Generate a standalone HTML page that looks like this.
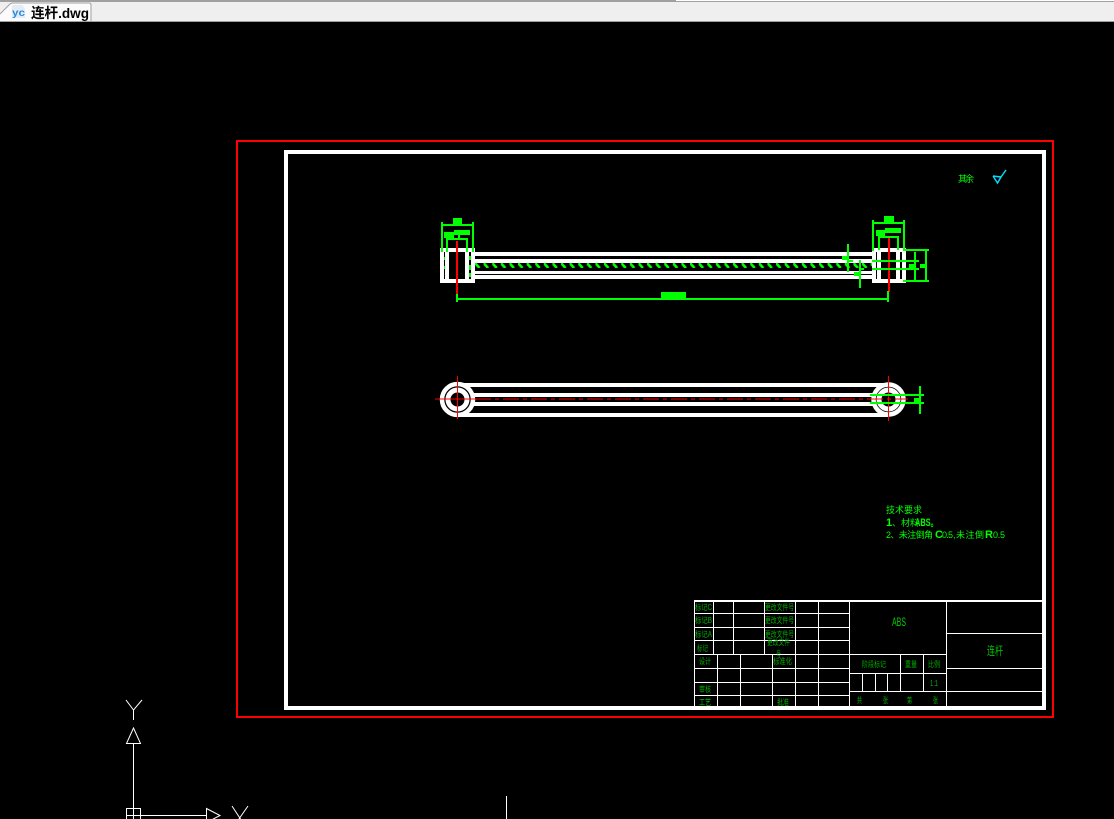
<!DOCTYPE html>
<html><head><meta charset="utf-8"><style>
html,body{margin:0;padding:0;background:#000;width:1114px;height:819px;overflow:hidden}
svg{display:block}
text{font-family:"Liberation Sans","Noto Sans CJK SC",sans-serif}
.d{fill:#00b000;font-size:8px}
.g{fill:#00ff00;font-size:9px}
.b{fill:#00ff00;font-size:11px;font-weight:bold}
</style></head><body>
<svg width="1114" height="819" viewBox="0 0 1114 819" xmlns="http://www.w3.org/2000/svg">
<defs><pattern id="h" width="8.6" height="5" patternUnits="userSpaceOnUse" x="475" y="263"><path d="M0 0L4.5 5" stroke="#0f0" stroke-width="2.600" fill="none"/></pattern></defs>
<rect width="1114" height="819" fill="#000"/>
<!-- top bar -->
<rect width="1114" height="22" fill="#efefef"/>
<rect width="676" height="2" fill="#a0a0a0"/>
<rect x="676" width="438" height="1" fill="#fff"/>
<rect x="676" y="1" width="438" height="1" fill="#a0a0a0"/>
<rect y="21" width="1114" height="1" fill="#a0a0a0"/>
<path d="M0 13L10 4Q11 3 13 3L89 3Q91 3 91 5L91 21L0 21Z" fill="#fbfbfb"/>
<path d="M0 14L10 4Q11 3 13 3L89 3Q91 3 91 5L91 21" fill="none" stroke="#a0a0a0"/>
<path d="M12 5H22L25 8V18H12Z" fill="#e4edf6"/>
<text x="12" y="16" textLength="13" lengthAdjust="spacingAndGlyphs" style="font-size:10px;font-weight:bold;fill:#2a8ae0">yc</text>
<text x="31" y="18" textLength="58" lengthAdjust="spacingAndGlyphs" style="font-size:14px;font-weight:bold;fill:#000">连杆.dwg</text>
<g shape-rendering="crispEdges">
<!-- red frame -->
<path d="M237 141H1053V717H237Z" fill="none" stroke="#f00" stroke-width="2"/>
<!-- white frame -->
<path d="M286 152H1044V708H286Z" fill="none" stroke="#fff" stroke-width="4"/>
<!-- title block -->
<rect x="694" y="600" width="348" height="2" fill="#fff"/>
<g fill="none" stroke="#fff" stroke-width="1">
<path d="M694.5 600V706"/>
<path d="M695 613.5H849M695 627.5H849M695 640.5H849M695 654.5H946M695 668.5H849M695 682.5H849M695 695.5H849"/>
<path d="M713.5 600V654M733.5 600V654M764.5 600V654M795.5 600V706M818.5 600V706M849.5 600V706"/>
<path d="M717.5 654V706M740.5 654V706M772.5 654V706"/>
<path d="M946.5 600V706M946 633.5H1042M946 668.5H1042M849 691.5H1042M849 673.5H946"/>
<path d="M900.5 654V691M923.5 654V691M862.5 673V691M875.5 673V691M887.5 673V691"/>
</g>
<!-- part top view -->
<g fill="#fff">
<rect x="473" y="252" width="400" height="4"/><rect x="473" y="259" width="400" height="4"/>
<rect x="473" y="271" width="400" height="3"/><rect x="473" y="275" width="400" height="4"/>
<rect x="440" y="248" width="35" height="4"/><rect x="440" y="279" width="35" height="4"/>
<rect x="440" y="248" width="4" height="35"/><rect x="445" y="248" width="4" height="35"/>
<rect x="465" y="248" width="4" height="35"/><rect x="471" y="248" width="4" height="35"/>
<rect x="872" y="248" width="34" height="4"/><rect x="872" y="279" width="34" height="4"/>
<rect x="872" y="248" width="4" height="35"/><rect x="877" y="248" width="4" height="35"/>
<rect x="896" y="248" width="4" height="35"/><rect x="902" y="248" width="4" height="35"/>
</g>
<rect x="475" y="263" width="397" height="5" fill="url(#h)"/>
<rect x="456" y="241" width="2" height="53" fill="#f00"/>
<rect x="888" y="238" width="2" height="54" fill="#f00"/>
<g fill="#0f0">
<rect x="441" y="222" width="2" height="30"/><rect x="472" y="222" width="2" height="30"/>
<rect x="441" y="224" width="33" height="2"/><rect x="453" y="218" width="9" height="6"/>
<rect x="446" y="238" width="2" height="14"/><rect x="466" y="238" width="2" height="14"/>
<rect x="446" y="238" width="22" height="2"/>
<rect x="444" y="232" width="10" height="6"/><rect x="454" y="230" width="16" height="5"/><rect x="458" y="235" width="2" height="3"/>
<rect x="469" y="256" width="2" height="4"/><rect x="469" y="265" width="2" height="5"/><rect x="469" y="273" width="2" height="4"/>
<rect x="444" y="257" width="1" height="3"/><rect x="444" y="266" width="1" height="3"/>
<rect x="457" y="298" width="432" height="2"/><rect x="456" y="294" width="2" height="8"/><rect x="887" y="291" width="2" height="11"/>
<rect x="661" y="292" width="25" height="6"/>
<rect x="872" y="220" width="2" height="31"/><rect x="903" y="220" width="2" height="31"/>
<rect x="872" y="222" width="33" height="2"/><rect x="884" y="216" width="10" height="6"/>
<rect x="878" y="236" width="2" height="14"/><rect x="897" y="236" width="2" height="14"/>
<rect x="878" y="236" width="21" height="2"/>
<rect x="876" y="230" width="9" height="6"/><rect x="885" y="228" width="16" height="5"/>
<rect x="903" y="249" width="26" height="2"/><rect x="903" y="280" width="26" height="2"/>
<rect x="925" y="250" width="2" height="30"/><rect x="914" y="252" width="2" height="28"/>
<rect x="872" y="260" width="47" height="2"/><rect x="872" y="268" width="47" height="2"/>
<rect x="909" y="264" width="6" height="5"/><rect x="920" y="264" width="6" height="4"/>
<rect x="847" y="244" width="2" height="28"/><rect x="842" y="256" width="6" height="4"/><rect x="849" y="260" width="4" height="2"/>
<rect x="859" y="260" width="2" height="28"/><rect x="854" y="272" width="6" height="4"/>
<rect x="861" y="268" width="3" height="2"/>
</g>
<!-- part front view -->
<g fill="#fff">
<rect x="458" y="383" width="430" height="4"/><rect x="462" y="393" width="420" height="4"/>
<rect x="462" y="402" width="420" height="4"/><rect x="458" y="413" width="430" height="4"/>
</g>
</g>
<g fill="#000" stroke="#fff">
<circle cx="457.500" cy="399.500" r="15.500" stroke-width="4.500"/><circle cx="457.500" cy="399.500" r="9.500" stroke-width="5"/>
<circle cx="888.500" cy="399.500" r="15" stroke-width="4.500"/><circle cx="888.500" cy="399.500" r="9.500" stroke-width="5"/>
</g>
<g shape-rendering="crispEdges">
<path d="M435 399H475M457.500 376V419M888.500 376V421" stroke="#f00" stroke-width="1" fill="none"/>
<path d="M475 399H908" stroke="#f00" stroke-width="1" stroke-dasharray="16 4 4 4" fill="none"/>
<g fill="#0f0">
<rect x="870" y="394" width="54" height="2"/><rect x="870" y="402" width="54" height="2"/>
<rect x="919" y="386" width="2" height="28"/><rect x="914" y="398" width="6" height="4"/>
</g>
</g>
<!-- axis icon -->
<g fill="none" stroke="#fff" stroke-width="1">
<path d="M126 700L133.500 710L142 700M133.500 710V720"/>
<path d="M133.500 728L126.500 743.500H140.500ZM133.500 743V819"/>
<path d="M126.500 808.500H140.500V825H126.500ZM133.500 808V825M127 815.500H206"/>
<path d="M206.500 808.500L220 815.500L206.500 822.500Z"/>
<path d="M232 806L247 829M248 806L232 829"/>
<path d="M506.500 796V819" shape-rendering="crispEdges"/>
<path d="M993 176L1001 177M993 176L997.500 183L1001 177L1006 170" stroke="#00e0ff" stroke-width="1.400"/>
</g>
<!-- notes -->
<text class="g" x="958" y="182" textLength="16" lengthAdjust="spacing">其余</text>
<text class="g" x="886" y="513" textLength="36" lengthAdjust="spacing">技术要求</text>
<text class="b" x="886" y="526">1</text>
<text class="g" x="892" y="526">、材料</text>
<text class="b" x="915" y="526" textLength="23" lengthAdjust="spacingAndGlyphs">ABS。</text>
<text class="g" x="886" y="538" textLength="47" lengthAdjust="spacing">2、未注倒角</text>
<text class="b" x="935" y="538">C</text>
<text class="g" x="942" y="538" textLength="11" lengthAdjust="spacing">0.5</text>
<text class="g" x="953" y="538" textLength="31" lengthAdjust="spacing">,未注倒</text>
<text class="b" x="985" y="538">R</text>
<text class="g" x="993" y="538" textLength="12" lengthAdjust="spacing">0.5</text>
<!-- table text -->
<g class="d">
<text class="d" x="695" y="610" textLength="17" lengthAdjust="spacingAndGlyphs">标记C</text>
<text class="d" x="695" y="623" textLength="17" lengthAdjust="spacingAndGlyphs">标记B</text>
<text class="d" x="695" y="637" textLength="17" lengthAdjust="spacingAndGlyphs">标记A</text>
<text class="d" x="697" y="651" textLength="11" lengthAdjust="spacingAndGlyphs">标记</text>
<text class="d" x="765" y="610" textLength="29" lengthAdjust="spacingAndGlyphs">更改文件号</text>
<text class="d" x="765" y="623" textLength="29" lengthAdjust="spacingAndGlyphs">更改文件号</text>
<text class="d" x="765" y="637" textLength="29" lengthAdjust="spacingAndGlyphs">更改文件号</text>
<text class="d" x="767" y="645" textLength="23" lengthAdjust="spacingAndGlyphs">更改文件</text>
<text class="d" x="776" y="657" textLength="5" lengthAdjust="spacingAndGlyphs">号</text>
<text class="d" x="699" y="664" textLength="12" lengthAdjust="spacingAndGlyphs">设计</text>
<text class="d" x="773" y="664" textLength="19" lengthAdjust="spacingAndGlyphs">标准化</text>
<text class="d" x="699" y="692" textLength="12" lengthAdjust="spacingAndGlyphs">审核</text>
<text class="d" x="699" y="705" textLength="12" lengthAdjust="spacingAndGlyphs" style="fill:#0c0">工艺</text>
<text class="d" x="777" y="705" textLength="12" lengthAdjust="spacingAndGlyphs">批准</text>
<text class="d" x="862" y="667" textLength="24" lengthAdjust="spacingAndGlyphs">阶段标记</text>
<text class="d" x="905" y="667" textLength="12" lengthAdjust="spacingAndGlyphs">重量</text>
<text class="d" x="928" y="667" textLength="12" lengthAdjust="spacingAndGlyphs">比例</text>
<text class="d" x="930" y="686" textLength="8" lengthAdjust="spacingAndGlyphs">1:1</text>
<text class="d" x="857" y="703" textLength="5" lengthAdjust="spacingAndGlyphs">共</text>
<text class="d" x="883" y="703" textLength="5" lengthAdjust="spacingAndGlyphs">张</text>
<text class="d" x="907" y="703" textLength="5" lengthAdjust="spacingAndGlyphs">第</text>
<text class="d" x="933" y="703" textLength="5" lengthAdjust="spacingAndGlyphs">张</text>
</g>
<text x="892" y="626" textLength="14" lengthAdjust="spacingAndGlyphs" style="font-size:12px;fill:#00d000">ABS</text>
<text x="987" y="655" textLength="16" lengthAdjust="spacingAndGlyphs" style="font-size:12px;fill:#00c000">连杆</text>
</svg>
</body></html>
